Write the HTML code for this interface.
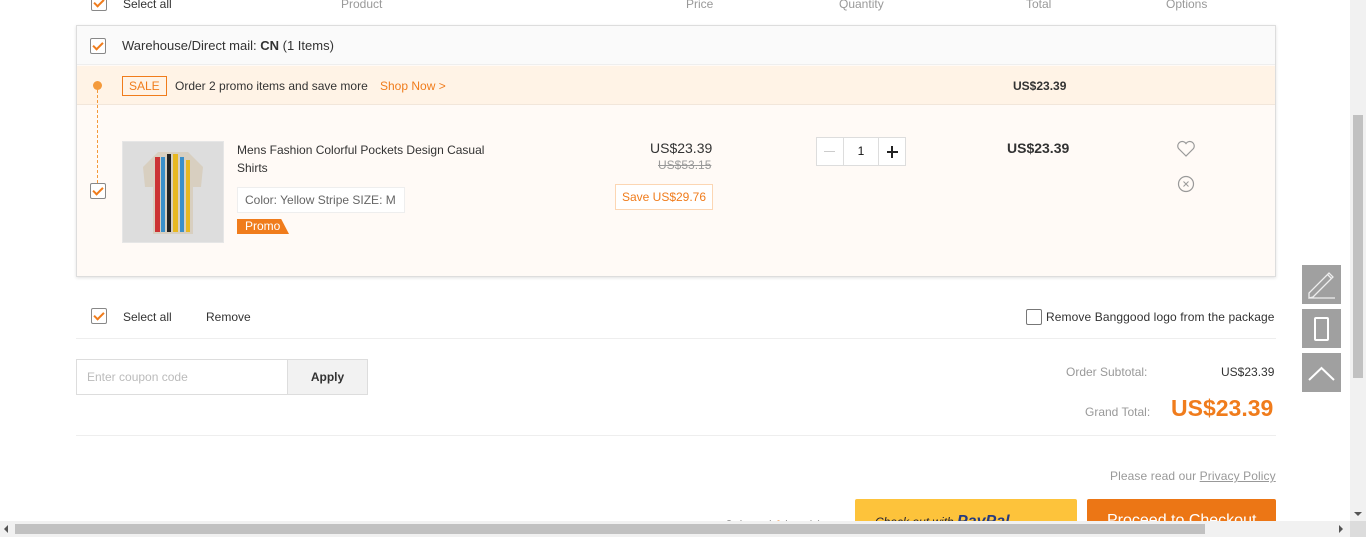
<!DOCTYPE html>
<html><head><meta charset="utf-8"><style>
*{margin:0;padding:0;box-sizing:border-box}
body{width:1366px;height:537px;overflow:hidden;background:#fff;font-family:"Liberation Sans",sans-serif;font-size:12px;color:#333;position:relative}
.a{position:absolute;white-space:nowrap}
.cb{position:absolute;width:16px;height:16px;border:1px solid #888;border-radius:2px;background:#fff}
.cb::after{content:"";position:absolute;left:4px;top:1px;width:4px;height:8px;border:solid #f07c1c;border-width:0 2px 2px 0;transform:rotate(45deg)}
.g{color:#999}
</style></head><body>
<div class="cb" style="left:91px;top:-5px"></div>
<div class="a" style="left:123px;top:-3px">Select all</div>
<div class="a g" style="left:341px;top:-3px">Product</div>
<div class="a g" style="left:686px;top:-3px">Price</div>
<div class="a g" style="left:839px;top:-3px">Quantity</div>
<div class="a g" style="left:1026px;top:-3px">Total</div>
<div class="a g" style="left:1166px;top:-3px">Options</div>

<div class="a" style="left:76px;top:25px;width:1200px;height:252px;border:1px solid #ddd;background:#fffaf6;box-shadow:0 1px 3px rgba(0,0,0,.12)"></div>
<div class="a" style="left:77px;top:26px;width:1198px;height:39px;background:#fafafa;border-bottom:1px solid #eee"></div>
<div class="cb" style="left:90px;top:38px"></div>
<div class="a" style="left:122px;top:38px;font-size:13px">Warehouse/Direct mail: <b>CN</b> (1 Items)</div>
<div class="a" style="left:77px;top:66px;width:1198px;height:39px;background:#fff3e6;border-bottom:1px solid #f2e6da"></div>
<div class="a" style="left:93px;top:81px;width:9px;height:9px;border-radius:50%;background:#f49a3c"></div>
<div class="a" style="left:97px;top:90px;height:93px;border-left:1px dashed #f49a3c"></div>
<div class="a" style="left:122px;top:76px;height:20px;padding:0 6px;border:1px solid #f07c1c;color:#f07c1c;line-height:18px">SALE</div>
<div class="a" style="left:175px;top:79px">Order 2 promo items and save more</div>
<div class="a" style="left:380px;top:79px;color:#f07c1c">Shop Now &gt;</div>
<div class="a" style="left:1013px;top:79px;font-weight:bold">US$23.39</div>

<div class="cb" style="left:90px;top:183px"></div>
<div class="a" style="left:122px;top:141px;width:102px;height:102px;background:#ddd;border:1px solid #e6e6e6">
 <svg width="100" height="100" viewBox="0 0 100 100"><path d="M35 10 L65 10 L80 25 L78 45 L70 45 L70 92 L30 92 L30 45 L22 45 L20 25Z" fill="#d8cfc0"/>
 <rect x="32" y="15" width="5" height="75" fill="#c33"/><rect x="38" y="15" width="4" height="75" fill="#3a8fc9"/><rect x="44" y="12" width="4" height="78" fill="#222"/><rect x="50" y="12" width="5" height="78" fill="#e8b820"/><rect x="57" y="15" width="4" height="75" fill="#3a8fc9"/><rect x="63" y="18" width="4" height="72" fill="#e8b820"/></svg>
</div>
<div class="a" style="left:237px;top:141px;line-height:18px;white-space:normal;width:270px">Mens Fashion Colorful Pockets Design Casual Shirts</div>
<div class="a" style="left:237px;top:187px;height:26px;width:168px;border:1px solid #eee;background:#fff;color:#666;padding-left:7px;line-height:24px">Color: Yellow Stripe SIZE: M</div>
<div class="a" style="left:237px;top:219px;height:15px;width:52px;background:#f07c1c;color:#fff;line-height:15px;padding-left:8px;clip-path:polygon(0 0,85% 0,100% 100%,0 100%)">Promo</div>

<div class="a" style="left:650px;top:140px;font-size:14px">US$23.39</div>
<div class="a" style="left:658px;top:158px;color:#999;text-decoration:line-through">US$53.15</div>
<div class="a" style="left:615px;top:184px;height:26px;width:98px;border:1px solid #fcd6b3;color:#f07c1c;line-height:24px;text-align:center;background:#fff">Save US$29.76</div>

<div class="a" style="left:816px;top:137px;width:90px;height:29px;border:1px solid #ddd;background:#fff"></div>
<div class="a" style="left:843px;top:138px;width:36px;height:27px;border-left:1px solid #ddd;border-right:1px solid #ddd;text-align:center;line-height:27px;color:#111">1</div>
<div class="a" style="left:824px;top:151px;width:11px;height:1px;background:#ccc"></div>
<div class="a" style="left:887px;top:151px;width:11px;height:2px;background:#222"></div>
<div class="a" style="left:891px;top:146px;width:2px;height:12px;background:#222"></div>
<div class="a" style="left:1007px;top:140px;font-size:14px;font-weight:bold">US$23.39</div>
<svg class="a" style="left:1176px;top:140px" width="20" height="18" viewBox="0 0 20 18"><path d="M10 16 L2.5 8.5 A4.3 4.3 0 0 1 10 3.5 A4.3 4.3 0 0 1 17.5 8.5Z" fill="none" stroke="#999" stroke-width="1.2"/></svg>
<svg class="a" style="left:1177px;top:175px" width="18" height="18"><circle cx="9" cy="9" r="7.5" fill="none" stroke="#999" stroke-width="1.2"/><path d="M6.5 6.5L11.5 11.5M11.5 6.5L6.5 11.5" stroke="#999"/></svg>

<div class="cb" style="left:91px;top:308px"></div>
<div class="a" style="left:123px;top:310px">Select all</div>
<div class="a" style="left:206px;top:310px">Remove</div>
<div class="a" style="left:1026px;top:309px;width:16px;height:16px;border:1px solid #777;border-radius:2px"></div>
<div class="a" style="left:1046px;top:310px;letter-spacing:0.1px">Remove Banggood logo from the package</div>
<div class="a" style="left:76px;top:338px;width:1200px;height:1px;background:#eee"></div>
<div class="a" style="left:76px;top:359px;width:292px;height:36px;border:1px solid #ddd"></div>
<div class="a" style="left:287px;top:360px;width:80px;height:34px;background:#f2f2f2;border-left:1px solid #ddd;text-align:center;line-height:34px;font-weight:bold">Apply</div>
<div class="a" style="left:87px;top:370px;color:#bbb">Enter coupon code</div>
<div class="a g" style="left:1066px;top:365px">Order Subtotal:</div>
<div class="a" style="left:1221px;top:365px">US$23.39</div>
<div class="a g" style="left:1085px;top:405px">Grand Total:</div>
<div class="a" style="left:1171px;top:395px;font-size:23px;font-weight:bold;color:#f07c1c">US$23.39</div>
<div class="a" style="left:76px;top:435px;width:1200px;height:1px;background:#eee"></div>
<div class="a g" style="left:1110px;top:469px;letter-spacing:0.1px">Please read our <span style="text-decoration:underline">Privacy Policy</span></div>
<div class="a" style="left:725px;top:518px">Selected <b style="color:#f07c1c">1</b> item(s)</div>
<div class="a" style="left:855px;top:499px;width:222px;height:30px;background:#fdc33b;border-radius:2px;padding:14px 0 0 20px;font-style:italic;color:#223;font-size:12px">Check out with <b style="color:#253b80;font-size:16px">PayPal</b></div>
<div class="a" style="left:1087px;top:499px;width:189px;height:30px;background:#ec7615;border-radius:2px;color:#fff;font-size:16px;padding:13px 0 0 20px">Proceed to Checkout</div>

<div class="a" style="left:1302px;top:265px;width:39px;height:39px;background:#a0a0a0"><svg width="39" height="39"><path d="M7 33L7 28L27 8L31 12L11 32Z M26 10L29 13 M7 33H33" fill="none" stroke="#eee" stroke-width="1.3"/></svg></div>
<div class="a" style="left:1302px;top:309px;width:39px;height:39px;background:#a0a0a0"><div class="a" style="left:12px;top:8px;width:15px;height:24px;border:2px solid #fff;border-radius:2px"></div></div>
<div class="a" style="left:1302px;top:353px;width:39px;height:39px;background:#a0a0a0"><svg width="39" height="39"><path d="M7 27L19.5 15L32 27" fill="none" stroke="#fff" stroke-width="2"/></svg></div>

<div class="a" style="left:1350px;top:0;width:16px;height:521px;background:#f1f1f1"></div>
<div class="a" style="left:1353px;top:115px;width:10px;height:263px;background:#c1c1c1"></div>
<div class="a" style="left:0;top:521px;width:1350px;height:16px;background:#f1f1f1"></div>
<div class="a" style="left:15px;top:524px;width:1190px;height:10px;background:#c1c1c1"></div>
<div class="a" style="left:1350px;top:521px;width:16px;height:16px;background:#dcdcdc"></div>
<div class="a" style="left:4px;top:525px;border:4px solid transparent;border-right:4px solid #555;border-left:0"></div>
<div class="a" style="left:1339px;top:525px;border:4px solid transparent;border-left:4px solid #555;border-right:0"></div>
<div class="a" style="left:1354px;top:512px;border:4px solid transparent;border-top:4px solid #555;border-bottom:0"></div>
</body></html>
